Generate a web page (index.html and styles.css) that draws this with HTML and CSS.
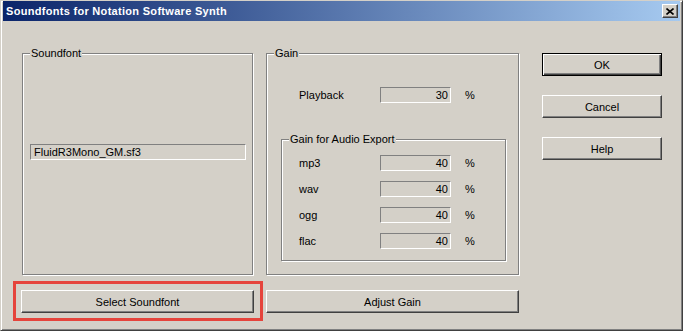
FILE: index.html
```html
<!DOCTYPE html>
<html lang="en">
<head>
  <meta charset="UTF-8">
  <title>Soundfonts for Notation Software Synth</title>
  <link rel="stylesheet" href="styles.css">
</head>
<body>
  <div class="window">
    <div class="caption">
      <span class="caption-title">Soundfonts for Notation Software Synth</span>
      <span class="close-btn">
        <svg width="8" height="7" viewBox="0 0 8 7">
          <path d="M0.5 0.5 L7.5 6.5 M7.5 0.5 L0.5 6.5" stroke="#000" stroke-width="1.6"/>
        </svg>
      </span>
    </div>

    <div class="dialog">
      <div class="group soundfont-group">
        <span class="group-label">Soundfont</span>
        <div class="field file-field">FluidR3Mono_GM.sf3</div>
      </div>

      <div class="group gain-group">
        <span class="group-label">Gain</span>
        <div class="gain-row playback-row">
          <span class="row-label">Playback</span>
          <div class="field num-field">30</div>
          <span class="pct">%</span>
        </div>

        <div class="group export-group">
          <span class="group-label">Gain for Audio Export</span>
          <div class="export-rows">
            <div class="gain-row">
              <span class="row-label">mp3</span>
              <div class="field num-field">40</div>
              <span class="pct">%</span>
            </div>
            <div class="gain-row">
              <span class="row-label">wav</span>
              <div class="field num-field">40</div>
              <span class="pct">%</span>
            </div>
            <div class="gain-row">
              <span class="row-label">ogg</span>
              <div class="field num-field">40</div>
              <span class="pct">%</span>
            </div>
            <div class="gain-row">
              <span class="row-label">flac</span>
              <div class="field num-field">40</div>
              <span class="pct">%</span>
            </div>
          </div>
        </div>
      </div>

      <div class="side-buttons">
        <button class="btn btn-default">OK</button>
        <button class="btn">Cancel</button>
        <button class="btn">Help</button>
      </div>

      <div class="highlight-wrap">
        <button class="btn btn-wide">Select Soundfont</button>
        <span class="highlight"></span>
      </div>
      <button class="btn btn-wide adjust-btn">Adjust Gain</button>
    </div>
  </div>
</body>
</html>
```

FILE: styles.css
```css
* {
  box-sizing: border-box;
}

body {
  margin: 0;
  font-family: "Liberation Sans", Arial, sans-serif;
  font-size: 11px;
  color: #000;
  background: #d4d0c8;
}

.window {
  width: 683px;
  height: 331px;
  background: #d4d0c8;
  border: 1px solid;
  border-color: #d4d0c8 #404040 #404040 #d4d0c8;
  box-shadow: inset 1px 1px #fff, inset -1px -1px #808080;
  padding: 0 2px;
}

.caption {
  height: 20px;
  display: flex;
  align-items: center;
  justify-content: space-between;
  padding: 0 2px 0 3px;
  background: linear-gradient(to right, #0a246a, #a6caf0);
  color: #fff;
}

.caption-title {
  font-weight: bold;
  font-size: 11px;
  letter-spacing: 0.3px;
}

.close-btn {
  width: 16px;
  height: 14px;
  display: flex;
  align-items: center;
  justify-content: center;
  background: #d4d0c8;
  border: 1px solid;
  border-color: #fff #404040 #404040 #fff;
  box-shadow: inset -1px -1px #808080;
}

.dialog {
  display: grid;
  grid-template-columns: 233px 253px 120px;
  grid-template-rows: 222px 23px;
  column-gap: 12px;
  row-gap: 15px;
  padding: 32px 0 0 18px;
}

.group {
  position: relative;
  border: 1px solid #808080;
  box-shadow: inset 1px 1px #fff, 1px 1px #fff;
}

.group-label {
  position: absolute;
  top: -7px;
  left: 7px;
  padding: 0 1px;
  background: #d4d0c8;
  line-height: 13px;
}

.soundfont-group {
  margin: 0 1px;
  padding: 90px 7px 0 7px;
}

.field {
  height: 16px;
  line-height: 14px;
  border: 1px solid;
  border-color: #808080 #fff #fff #808080;
  background: #d4d0c8;
  padding: 0 3px;
  white-space: nowrap;
}

.file-field {
  width: 216px;
}

.gain-group {
  padding: 33px 12px 0 14px;
}

.gain-row {
  display: grid;
  grid-template-columns: 81px 71px auto;
  align-items: center;
  height: 16px;
}

.playback-row {
  margin-left: 18px;
}

.num-field {
  text-align: right;
  padding-right: 2px;
}

.pct {
  margin-left: 14px;
}

.export-group {
  margin-top: 36px;
  height: 122px;
  padding: 15px 0 0 17px;
}

.export-rows {
  display: flex;
  flex-direction: column;
  gap: 10px;
}

.side-buttons {
  grid-column: 3;
  grid-row: 1;
  display: flex;
  flex-direction: column;
  gap: 19px;
  margin-left: 11px;
}

.btn {
  font-family: "Liberation Sans", Arial, sans-serif;
  font-size: 11px;
  color: #000;
  height: 23px;
  width: 120px;
  padding: 0;
  background: #d4d0c8;
  border: 1px solid;
  border-color: #fff #404040 #404040 #fff;
  box-shadow: inset -1px -1px #808080;
}

.btn-default {
  border: 1px solid #000;
  box-shadow: inset 1px 1px #fff, inset -1px -1px #404040, inset -2px -2px #808080;
}

.btn-wide {
  width: 100%;
}

.highlight-wrap {
  position: relative;
  grid-column: 1;
  grid-row: 2;
}

.highlight {
  position: absolute;
  top: -9px;
  bottom: -8px;
  left: -8px;
  right: -9px;
  border: 3px solid #e5443c;
}

.adjust-btn {
  grid-column: 2;
  grid-row: 2;
}
```
